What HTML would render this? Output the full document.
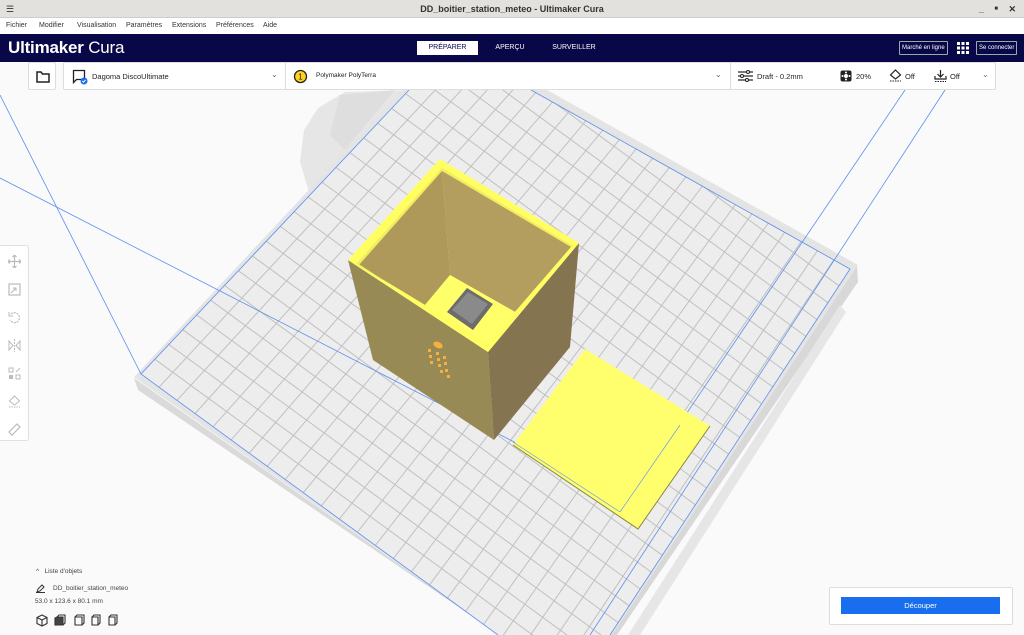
<!DOCTYPE html>
<html><head><meta charset="utf-8">
<style>
*{margin:0;padding:0;box-sizing:border-box}
html,body{width:1024px;height:635px;overflow:hidden}
body{background:#fafafa;font-family:"Liberation Sans",sans-serif;position:relative}
.title{position:absolute;left:0;top:0;width:1024px;height:18px;background:#e3e1de;border-bottom:1px solid #cfcdca;font-size:9px;font-weight:bold;color:#333;text-align:center;line-height:18px}
.menu{position:absolute;left:0;top:18px;width:1024px;height:16px;background:#fff;font-size:7px;color:#333}
.menu span{position:absolute;top:4px}
.head{position:absolute;left:0;top:34px;width:1024px;height:28px;background:#080849}
.logo{position:absolute;left:8px;top:38px;color:#fff;font-size:17px;letter-spacing:-0.2px}
.tab{position:absolute;top:41px;height:14px;font-size:7px;color:#fff;line-height:14px;text-align:center}
.hb{position:absolute;top:41px;height:14px;border:1px solid #9aa;color:#fff;font-size:6px;line-height:12px;padding:0 2px;border-radius:1px}
.bar{position:absolute;top:62px;height:28px;background:#fff;border:1px solid #ddd;font-size:7.5px;color:#222}
.left{position:absolute;left:0;top:245px;width:29px;height:196px;background:#fff;border:1px solid #e0e0e0;border-left:none;border-radius:0 3px 3px 0}
.left svg{position:absolute;left:8px}
.small{position:absolute;font-size:6.5px;color:#444}
</style></head><body>
<svg style="position:absolute;left:0;top:0" width="1024" height="635">
 <polygon points="300,162 304,130 318,108 345,92 420,90 338,200 312,202" fill="#e6e6e6"/>
 <polygon points="340,95 395,90 345,150 330,135" fill="#dedede"/>
 <polygon points="134,378 138,390 500,635 500,635" fill="#dadada"/>
 <polygon points="857,266 858,282 617,635 606,635" fill="#d8d8d8"/>
 <polygon points="840,305 846,312 640,635 628,635" fill="#e6e6e6"/>
 <polygon points="134,377 406,86 540,86 858,265 612,635 500,635" fill="#e4e4e4"/>
 <clipPath id="pc"><polygon points="141,374 409,90 531,90 850,269 610,635 498,635"/></clipPath>
 <g clip-path="url(#pc)">
  <rect x="0" y="80" width="1024" height="555" fill="#ededed"/>
  <g id="grid" stroke="#c0c0c0" stroke-width="1" fill="none"></g>
 </g>
 <g stroke="#5a8ff0" stroke-width="0.8" fill="none">
  <polyline points="409,90 141,374 498,635"/>
  <polyline points="531,90 850,269 610,635"/>
  <line x1="0" y1="95" x2="141" y2="374"/>
  <line x1="0" y1="178" x2="520" y2="445"/>
  <line x1="945" y1="90" x2="590" y2="635"/>
  <line x1="905" y1="90" x2="620" y2="512"/>
 </g>
 <polygon points="513,445 585,349 710,426 638,529" fill="#ffff6e"/>
 <polyline points="513,445 638,529 710,426" fill="none" stroke="#8a8640" stroke-width="1"/>
 <line x1="620" y1="512" x2="680" y2="425" stroke="#6a9af0" stroke-width="0.7"/>
 <line x1="513" y1="442" x2="620" y2="512" stroke="#6a9af0" stroke-width="0.7"/>
 <polygon points="348,260 488,352 494,440 373,360" fill="#978a55"/>
 <polygon points="488,352 579,243 570,347 494,440" fill="#847550"/>
 <polygon points="348,260 440,159 579,243 488,352" fill="#ffff62"/>
 <polygon points="356,264 442,168 573,246 488,344" fill="#f2ec60"/>
 <polygon points="359,265 442,171 450,275 425,305" fill="#ae985a"/>
 <polygon points="442,171 571,247 517,313 450,275" fill="#b39e5f"/>
 <polygon points="359,265 425,305 488,343 571,247 575,245 488,347 357,263" fill="#ffff62"/>
 <polygon points="425,305 450,275 517,313 488,343" fill="#ffff6a"/>
 <polygon points="447,312 467,288 493,304 473,330" fill="#6c6c6c"/>
 <polygon points="452,310 468,292 488,304 472,324" fill="#8a8a8a"/>
 <g fill="#f5b040">
  <ellipse cx="438" cy="345" rx="5" ry="3" transform="rotate(25 438 345)"/>
  <rect x="428" y="349" width="3" height="3"/><rect x="429" y="355" width="3" height="3"/><rect x="430" y="361" width="3" height="3"/>
  <rect x="436" y="352" width="3" height="3"/><rect x="437" y="358" width="3" height="3"/><rect x="438" y="364" width="3" height="3"/>
  <rect x="443" y="356" width="3" height="3"/><rect x="444" y="362" width="3" height="3"/><rect x="445" y="369" width="3" height="3"/>
  <rect x="440" y="370" width="3" height="3"/><rect x="447" y="375" width="3" height="3"/>
 </g>
</svg>
<script>
(function(){
 var L=[141,374],T=[489,5],R=[850,269],B=[574,690];
 function lp(a,b,t){return [a[0]+(b[0]-a[0])*t,a[1]+(b[1]-a[1])*t];}
 var d="",N=24,M=25,i,p,q;
 for(i=1;i<N;i++){p=lp(L,B,i/N);q=lp(T,R,i/N);d+="M"+p[0].toFixed(1)+" "+p[1].toFixed(1)+"L"+q[0].toFixed(1)+" "+q[1].toFixed(1);}
 for(i=1;i<M;i++){p=lp(L,T,i/M);q=lp(B,R,i/M);d+="M"+p[0].toFixed(1)+" "+p[1].toFixed(1)+"L"+q[0].toFixed(1)+" "+q[1].toFixed(1);}
 var g=document.getElementById("grid");
 var pa=document.createElementNS("http://www.w3.org/2000/svg","path");
 pa.setAttribute("d",d);g.appendChild(pa);
})();
</script>

<div class="title">DD_boitier_station_meteo - Ultimaker Cura
 <span style="position:absolute;left:6px;top:0;font-weight:normal">&#9776;</span>
 <span style="position:absolute;right:40px;top:0">_</span><span style="position:absolute;right:26px;top:0;font-size:6px">&#9632;</span><span style="position:absolute;right:8px;top:0">&#10005;</span>
</div>
<div class="menu">
 <span style="left:6px">Fichier</span><span style="left:39px">Modifier</span><span style="left:77px">Visualisation</span><span style="left:126px">Paramètres</span><span style="left:172px">Extensions</span><span style="left:216px">Préférences</span><span style="left:263px">Aide</span>
</div>
<div class="head"></div>
<div class="logo"><b>Ultimaker</b> Cura</div>
<div class="tab" style="left:417px;width:61px;background:#fff;color:#080849">PRÉPARER</div>
<div class="tab" style="left:490px;width:40px">APERÇU</div>
<div class="tab" style="left:550px;width:48px">SURVEILLER</div>
<div class="hb" style="left:899px">Marché en ligne</div>
<svg style="position:absolute;left:957px;top:42px" width="12" height="12"><g fill="#fff"><rect x="0" y="0" width="3" height="3"/><rect x="4.5" y="0" width="3" height="3"/><rect x="9" y="0" width="3" height="3"/><rect x="0" y="4.5" width="3" height="3"/><rect x="4.5" y="4.5" width="3" height="3"/><rect x="9" y="4.5" width="3" height="3"/><rect x="0" y="9" width="3" height="3"/><rect x="4.5" y="9" width="3" height="3"/><rect x="9" y="9" width="3" height="3"/></g></svg>
<div class="hb" style="left:976px">Se connecter</div>

<div class="bar" style="left:28px;width:28px;border-radius:2px">
 <svg style="position:absolute;left:7px;top:8px" width="14" height="12"><path d="M1 1h4l1.5 2H13v8H1z" fill="none" stroke="#222" stroke-width="1.5"/></svg>
</div>
<div class="bar" style="left:63px;width:933px;border-radius:2px">
 <svg style="position:absolute;left:8px;top:6px" width="16" height="16"><path d="M1.5 1.5h11v9h-8l-3 3z" fill="none" stroke="#222" stroke-width="1.3"/><circle cx="12" cy="12" r="3.5" fill="#196ef0"/><path d="M10.3 12l1.2 1.2 2-2.2" stroke="#fff" fill="none" stroke-width="1"/></svg>
 <span style="position:absolute;left:28px;top:9px">Dagoma DiscoUltimate</span>
 <span style="position:absolute;left:207px;top:7px;color:#666;font-size:8px">&#8964;</span>
 <div style="position:absolute;left:221px;top:0;width:1px;height:26px;background:#ddd"></div>
 <svg style="position:absolute;left:229px;top:6px" width="15" height="15"><circle cx="7.5" cy="7.5" r="6" fill="#ffd21f" stroke="#222" stroke-width="1.3"/><text x="5.3" y="10.5" font-size="8" font-family="Liberation Sans" fill="#222">1</text></svg>
 <span style="position:absolute;left:252px;top:9px;font-size:6.5px">Polymaker PolyTerra</span>
 <span style="position:absolute;left:651px;top:7px;color:#666;font-size:8px">&#8964;</span>
 <div style="position:absolute;left:666px;top:0;width:1px;height:26px;background:#ddd"></div>
 <svg style="position:absolute;left:674px;top:7px" width="15" height="12"><g stroke="#222" stroke-width="1.2"><line x1="0" y1="2" x2="15" y2="2"/><line x1="0" y1="6" x2="15" y2="6"/><line x1="0" y1="10" x2="15" y2="10"/></g><g fill="#fff" stroke="#222"><circle cx="10" cy="2" r="1.5"/><circle cx="4" cy="6" r="1.5"/><circle cx="9" cy="10" r="1.5"/></g></svg>
 <span style="position:absolute;left:693px;top:9px">Draft - 0.2mm</span>
 <svg style="position:absolute;left:776px;top:7px" width="12" height="12"><rect x="0.5" y="0.5" width="11" height="11" rx="2" fill="#222"/><circle cx="6" cy="6" r="2" fill="#fff"/><circle cx="6" cy="2.5" r="1" fill="#fff"/><circle cx="6" cy="9.5" r="1" fill="#fff"/><circle cx="2.5" cy="6" r="1" fill="#fff"/><circle cx="9.5" cy="6" r="1" fill="#fff"/></svg>
 <span style="position:absolute;left:792px;top:9px">20%</span>
 <svg style="position:absolute;left:825px;top:6px" width="13" height="14"><path d="M6.5 1l5 5-5 4-5-4z" fill="none" stroke="#222" stroke-width="1.2"/><path d="M1 12h11" stroke="#222" stroke-dasharray="1.5 1"/></svg>
 <span style="position:absolute;left:841px;top:9px">Off</span>
 <svg style="position:absolute;left:870px;top:6px" width="13" height="14"><path d="M6.5 1v7M3.5 5l3 3 3-3M1 7v3h11V7" fill="none" stroke="#222" stroke-width="1.2"/><path d="M1 12.5h11" stroke="#222" stroke-dasharray="1.5 1"/></svg>
 <span style="position:absolute;left:886px;top:9px">Off</span>
 <span style="position:absolute;left:918px;top:7px;color:#666;font-size:8px">&#8964;</span>
</div>

<div class="left">
 <svg style="top:9px" width="13" height="13"><path d="M6.5 0v13M0 6.5h13M6.5 0l-2 2M6.5 0l2 2M6.5 13l-2-2M6.5 13l2-2M0 6.5l2-2M0 6.5l2 2M13 6.5l-2-2M13 6.5l-2 2" stroke="#bbb" fill="none" stroke-width="1.2"/></svg>
 <svg style="top:37px" width="13" height="13"><rect x="1" y="1" width="11" height="11" stroke="#bbb" fill="none" stroke-width="1.2"/><path d="M3 10l5-5M5 5h3v3" stroke="#bbb" fill="none"/></svg>
 <svg style="top:65px" width="13" height="13"><path d="M3 3a5 5 0 1 1 -1 6" stroke="#bbb" fill="none" stroke-width="1.2" stroke-dasharray="2 1"/><path d="M1 1v4h4" stroke="#bbb" fill="none"/></svg>
 <svg style="top:93px" width="13" height="13"><path d="M1 2v9l4-4.5zM12 2v9l-4-4.5z" stroke="#bbb" fill="none"/><path d="M6.5 0v13" stroke="#bbb" stroke-dasharray="2 1"/></svg>
 <svg style="top:121px" width="13" height="13"><rect x="1" y="1" width="4" height="4" fill="none" stroke="#bbb"/><rect x="1" y="8" width="4" height="4" fill="#bbb"/><rect x="8" y="8" width="4" height="4" fill="none" stroke="#bbb"/><path d="M8 5l4-4" stroke="#bbb"/></svg>
 <svg style="top:149px" width="13" height="13"><path d="M6.5 1l5 5-5 4-5-4z" fill="none" stroke="#bbb"/><path d="M1 12h11" stroke="#bbb" stroke-dasharray="1.5 1"/></svg>
 <svg style="top:177px" width="13" height="13"><path d="M9 1l3 3-8 8-3-3z" fill="none" stroke="#bbb" stroke-width="1.2"/></svg>
</div>

<div class="small" style="left:36px;top:568px">^&nbsp;&nbsp;&nbsp;Liste d'objets</div>
<svg style="position:absolute;left:36px;top:584px" width="9" height="9"><path d="M1 8l1-3 4-4 2 2-4 4zM0 8.5h9" stroke="#333" fill="none"/></svg>
<div class="small" style="left:53px;top:585px">DD_boitier_station_meteo</div>
<div class="small" style="left:35px;top:598px">53.0 x 123.6 x 80.1 mm</div>
<svg style="position:absolute;left:36px;top:614px" width="84" height="13"><g fill="none" stroke="#333" stroke-width="1.1">
 <path d="M6 1l5 2.5v6L6 12 1 9.5v-6zM1 3.5L6 6l5-2.5M6 6v6"/>
 <path d="M21 3h6v8h-8V4z" fill="#444"/><path d="M21 3l2-2h6v8l-2 2"/>
 <path d="M39 3h7v8h-7zM39 3l2-2h7v8l-2 2"/>
 <path d="M56 3h6v8h-6zM56 3l2-2h6v8l-2 2"/>
 <path d="M73 3h6v8h-6zM73 3l2-2h6v8l-2 2"/>
</g></svg>

<div style="position:absolute;left:829px;top:587px;width:184px;height:38px;background:#fff;border:1px solid #ddd;border-radius:2px"></div>
<div style="position:absolute;left:841px;top:597px;width:159px;height:17px;background:#196ef0;color:#fff;font-size:7.5px;text-align:center;line-height:17px">Découper</div>
</body></html>
